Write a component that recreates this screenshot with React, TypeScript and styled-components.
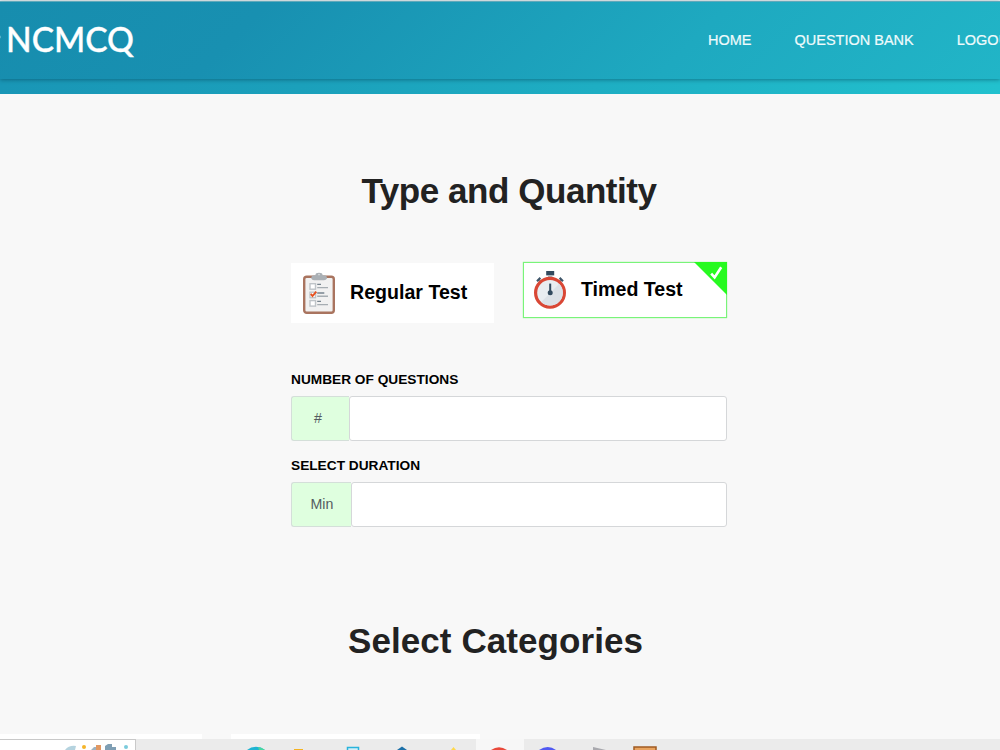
import React from 'react';
import styled, { createGlobalStyle } from 'styled-components';

const GlobalStyle = createGlobalStyle`
  * { box-sizing: border-box; }
  html, body { margin: 0; padding: 0; }
  body { overflow: hidden; background: #f8f8f8; font-family: "Liberation Sans", Arial, sans-serif; }
`;

const Page = styled.div`
  width: 1000px;
  height: 750px;
  overflow: hidden;
  display: flex;
  flex-direction: column;
  background: #f8f8f8;
`;

const Hero = styled.header`
  height: 94px;
  flex: none;
  border-top: 1px solid #e6ecee;
  background: linear-gradient(90deg, #1996b6 0%, #1ba0bb 30%, #22c1ce 100%);
`;

const NavBar = styled.div`
  height: 78px;
  display: flex;
  align-items: flex-start;
  justify-content: space-between;
  background: linear-gradient(135deg, #178dae 0%, #1890b1 25%, #1ea9c0 68%, #21b5c7 100%);
  border-top: 1px solid #5fa9bb;
  box-shadow: 0 1px 4px rgba(0, 50, 70, 0.45);
`;

const Logo = styled.svg`
  width: 140px;
  height: 60px;
  flex: none;
`;

const Nav = styled.nav`
  display: flex;
  width: 292px;
  gap: 43px;
  padding-top: 30px;
  overflow: hidden;
`;

const NavLink = styled.span`
  font-size: 14.5px;
  line-height: 17px;
  color: #effbfc;
  -webkit-text-stroke: 0.2px #effbfc;
  white-space: nowrap;
`;

const Heading = styled.h2<{ $top: number; $left: number; $size: number; $spacing: number }>`
  margin: ${(p) => p.$top}px 0 0 ${(p) => p.$left}px;
  font-size: ${(p) => p.$size}px;
  letter-spacing: ${(p) => p.$spacing}px;
  line-height: 40px;
  font-weight: 700;
  color: #222;
  white-space: nowrap;
`;

const Form = styled.section`
  width: 436px;
  margin-left: 291px;
  display: flex;
  flex-direction: column;
`;

const Options = styled.div`
  display: flex;
  justify-content: space-between;
  align-items: flex-start;
  height: 61px;
  margin-top: 51px;
`;

const Option = styled.div<{ $selected?: boolean }>`
  position: relative;
  display: flex;
  align-items: center;
  width: ${(p) => (p.$selected ? 204 : 203)}px;
  height: ${(p) => (p.$selected ? 56 : 60)}px;
  margin-top: ${(p) => (p.$selected ? 0 : 1)}px;
  padding-left: ${(p) => (p.$selected ? 9 : 11)}px;
  padding-bottom: 1px;
  gap: 14px;
  background: #fff;
  border: ${(p) => (p.$selected ? '1px solid #79f479' : '0')};
  box-shadow: ${(p) => (p.$selected ? '0 0 1px #79f479' : 'none')};
  font-size: 19.6px;
  font-weight: 700;
  letter-spacing: 0;
  color: #000;
  white-space: nowrap;
`;

const Icon = styled.svg`
  width: 34px;
  height: 42px;
  flex: none;
`;

const Corner = styled.svg`
  position: absolute;
  top: -1px;
  right: -1px;
  width: 33px;
  height: 33px;
`;

const Label = styled.label<{ $top: number }>`
  margin-top: ${(p) => p.$top}px;
  height: 16px;
  line-height: 16px;
  font-size: 13.7px;
  font-weight: 700;
  color: #000;
`;

const InputGroup = styled.div`
  display: flex;
  width: 436px;
  height: 45px;
  margin-top: 8px;
`;

const Prefix = styled.span<{ $width: number; $inset: number }>`
  width: ${(p) => p.$width}px;
  display: flex;
  align-items: center;
  padding: 0 0 2px ${(p) => p.$inset}px;
  border: 1px solid #d4dfd9;
  border-right: 0;
  border-radius: 3px 0 0 3px;
  background: #dfffdf;
  color: #555c61;
  font-size: 14.2px;
`;

const Input = styled.input`
  flex: 1;
  min-width: 0;
  border: 1px solid #d5d7d9;
  border-radius: 3px;
  background: #fff;
  outline: none;
`;

const CardRow = styled.div`
  margin-top: 73px;
  height: 5px;
  display: flex;
  gap: 29px;
`;

const CardEdge = styled.div<{ $width: number }>`
  width: ${(p) => p.$width}px;
  background: #fff;
`;

const Taskbar = styled.footer`
  display: flex;
  flex: none;
  height: 11px;
  background: #ebebeb;
`;

const SearchEdge = styled.div`
  width: 136px;
  border-top: 1px solid #c9c9c9;
  border-right: 1px solid #c9c9c9;
  background: #fff;
`;

const TaskIcons = styled.svg`
  width: 864px;
  height: 11px;
`;

const SearchArt = styled.svg`
  display: block;
  width: 135px;
  height: 10px;
`;

const ClipboardIcon = () => (
  <Icon viewBox="0 0 34 42">
    <rect x="2.2" y="4.8" width="29.6" height="36" rx="2.5" fill="#f1f1f1" stroke="#a9745f" strokeWidth="2.4" />
    <path d="M9.3 6.5Q9.3 3.2 12 3.2H13.4Q13.5 0.8 17 0.8T20.6 3.2H22.2Q25 3.2 25 6.5Q24 8.3 22 8.3H12Q10 8.3 9.3 6.5Z" fill="#aab0b5" />
    <circle cx="17" cy="2.6" r="0.8" fill="#dfe2e4" />
    <g fill="#fff" stroke="#bfc4c8" strokeWidth="1.4">
      <rect x="8" y="11.7" width="5.5" height="5.5" />
      <rect x="8" y="20.2" width="5.5" height="5.5" />
      <rect x="8" y="28.6" width="5.5" height="5.5" />
    </g>
    <g stroke="#77848e" strokeWidth="1.4">
      <path d="M15.2 12.4H19M15.2 21H22.3M15.2 29.4H19" />
      <path d="M15.2 15.6H26M15.2 24.2H26M15.2 32.6H26" stroke="#a6adb2" />
    </g>
    <path d="M8.8 21.8L10.5 24L14.3 19.6" fill="none" stroke="#e7511f" strokeWidth="1.9" />
  </Icon>
);

const StopwatchIcon = () => (
  <Icon viewBox="0 0 34 42">
    <rect x="13.2" y="2" width="8" height="4.4" fill="#324a5e" />
    <rect x="15" y="6.2" width="4.4" height="3" fill="#acb3ba" />
    <path d="M5.2 10.5L8.2 13.4M28.8 10.5L25.8 13.4" stroke="#8a96a0" strokeWidth="1.8" />
    <path d="M4 12.2L7.4 8.9M30 12.2L26.6 8.9" stroke="#3f566a" strokeWidth="2.2" />
    <circle cx="17" cy="23.8" r="14.4" fill="#e9edf1" stroke="#d94735" strokeWidth="3.2" />
    <path d="M8.2 33A12.8 12.8 0 0 0 26.2 14.8Z" fill="#dce1e7" />
    <path d="M17.2 14.6V24" stroke="#324a5e" strokeWidth="2" />
    <circle cx="17.2" cy="23.8" r="2.5" fill="#324a5e" />
  </Icon>
);

export default function App() {
  return (
    <Page>
      <GlobalStyle />
      <Hero>
        <NavBar>
          <Logo viewBox="0 0 140 60">
            <circle cx="-1.2" cy="35" r="1.8" fill="#8fd0e0" />
            <text x="6" y="49.6" fontFamily="Lato, sans-serif" fontSize="34" fontWeight="500" fill="#fff" stroke="#fff" strokeWidth="0.4" textLength="128" lengthAdjust="spacingAndGlyphs">NCMCQ</text>
          </Logo>
          <Nav>
            <NavLink>HOME</NavLink>
            <NavLink>QUESTION BANK</NavLink>
            <NavLink>LOGOUT</NavLink>
          </Nav>
        </NavBar>
      </Hero>

      <Heading $top={77} $left={361.5} $size={35} $spacing={-0.45}>Type and Quantity</Heading>

      <Form>
        <Options>
          <Option>
            <ClipboardIcon />
            Regular Test
          </Option>
          <Option $selected>
            <StopwatchIcon />
            Timed Test
            <Corner viewBox="0 0 33 33">
              <path d="M0 0H33V33Z" fill="#27fa20" />
              <path d="M17.2 11.6L20.6 15.4L27.2 5.2" fill="none" stroke="#fff" strokeWidth="2.6" />
            </Corner>
          </Option>
        </Options>
        <Label $top={49}>NUMBER OF QUESTIONS</Label>
        <InputGroup>
          <Prefix $width={58} $inset={22}>#</Prefix>
          <Input />
        </InputGroup>
        <Label $top={17}>SELECT DURATION</Label>
        <InputGroup>
          <Prefix $width={60} $inset={18.5}>Min</Prefix>
          <Input />
        </InputGroup>
      </Form>

      <Heading $top={94} $left={348} $size={35} $spacing={0.08}>Select Categories</Heading>

      <CardRow>
        <CardEdge $width={202} />
        <CardEdge $width={249} />
      </CardRow>
      <Taskbar>
        <SearchEdge>
          <SearchArt viewBox="0 0 135 10">
            <path d="M65 10Q69 5 76 6L75 10Z" fill="#b5d3df" />
            <circle cx="84" cy="7" r="2" fill="#f5b52a" />
            <path d="M91 10L94 7H96V5H101V10Z" fill="#9db2c2" />
            <rect x="96" y="5" width="5" height="5" fill="#e29862" />
            <path d="M105 10V6L108 4H112V7H116V10Z" fill="#7f9fb4" />
            <circle cx="126" cy="7" r="2" fill="#7bcbdc" />
          </SearchArt>
        </SearchEdge>
        <TaskIcons viewBox="136 0 864 11">
          <rect x="476" y="0" width="48" height="11" fill="#f7f7f7" />
          <path d="M247 11Q251 7.8 256 7.8T265 11Z" fill="#1eb3d2" />
          <path d="M258 8Q262 8.5 265 11H259Z" fill="#47d7a0" />
          <path d="M294 10H303V11H294Z" fill="#f4b321" />
          <path d="M347.5 11V8.6H358.5V11" fill="#d5eff8" stroke="#29b4dc" strokeWidth="1.5" />
          <path d="M397 11L402 7.5L407 11Z" fill="#1c70a8" />
          <path d="M451 11L453.5 8L456 11Z" fill="#ffd84c" />
          <path d="M491 11Q499 5.5 507 11Z" fill="#e9493b" />
          <path d="M539 11Q548 5 556 11Z" fill="#5059f2" />
          <path d="M593 8L606 11H593Z" fill="#a9a9ae" />
          <path d="M634 11V8H656V11" fill="#e8a35f" stroke="#a05b22" strokeWidth="1.5" />
        </TaskIcons>
      </Taskbar>
    </Page>
  );
}
